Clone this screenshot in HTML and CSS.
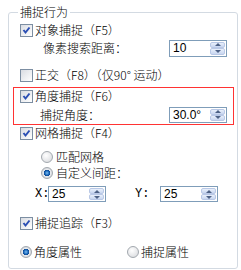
FILE: index.html
```html
<!DOCTYPE html>
<html lang="zh-CN">

<head>
    <meta charset="UTF-8">
    <title>捕捉行为</title>
    <link rel="stylesheet" href="styles.css">
</head>

<body>
<fieldset class="group">
    <legend class="group-title">捕捉行为</legend>

    <div class="row check-row r-object">
        <span class="check"><svg viewBox="0 0 11 11"><path d="M2.5 5 L4.5 7.5 L8.5 2.5"/></svg></span>
        <span>对象捕捉（F5）</span>
    </div>
    <div class="row field-row r-pixel">
        <span>像素搜索距离：</span>
        <span class="spin"><span class="spin-value">10</span><span class="spin-btns"><i class="up"></i><i class="down"></i></span></span>
    </div>
    <div class="row check-row r-ortho">
        <span class="check off"></span>
        <span>正交（F8）（仅90° 运动）</span>
    </div>

    <div class="highlight">
        <div class="row check-row">
            <span class="check"><svg viewBox="0 0 11 11"><path d="M2.5 5 L4.5 7.5 L8.5 2.5"/></svg></span>
            <span>角度捕捉（F6）</span>
        </div>
        <div class="row field-row r-angle">
            <span>捕捉角度：</span>
            <span class="spin"><span class="spin-value">30.0°</span><span class="spin-btns"><i class="up"></i><i class="down"></i></span></span>
        </div>
    </div>

    <div class="row check-row r-grid">
        <span class="check"><svg viewBox="0 0 11 11"><path d="M2.5 5 L4.5 7.5 L8.5 2.5"/></svg></span>
        <span>网格捕捉（F4）</span>
    </div>
    <div class="row radio-row r-match">
        <span class="radio"></span>
        <span>匹配网格</span>
    </div>
    <div class="row radio-row r-custom">
        <span class="radio on"></span>
        <span>自定义间距：</span>
    </div>
    <div class="row xy-row">
        <span class="xy-label">X:</span>
        <span class="spin"><span class="spin-value">25</span><span class="spin-btns"><i class="up"></i><i class="down"></i></span></span>
        <span class="xy-label y-label">Y:</span>
        <span class="spin"><span class="spin-value">25</span><span class="spin-btns"><i class="up"></i><i class="down"></i></span></span>
    </div>
    <div class="row check-row r-track">
        <span class="check"><svg viewBox="0 0 11 11"><path d="M2.5 5 L4.5 7.5 L8.5 2.5"/></svg></span>
        <span>捕捉追踪（F3）</span>
    </div>
    <div class="row props-row">
        <div class="prop">
            <span class="radio on"></span>
            <span>角度属性</span>
        </div>
        <div class="prop">
            <span class="radio"></span>
            <span>捕捉属性</span>
        </div>
    </div>
</fieldset>
</body>

</html>
```

FILE: styles.css
```css
body {
    margin: 0;
    background: #fff;
    color: #000;
    font: 300 12px/14px "Noto Sans CJK SC", "Noto Sans", sans-serif;
}

.group {
    margin: 5px 12px 0 8px;
    padding: 3px 3px 8px 4px;
    border: 1px solid #d3dae2;
    border-radius: 3px;
}

.group-title {
    margin-left: 5px;
    padding: 0 2px;
    line-height: 14px;
}

.row {
    display: flex;
    align-items: center;
    height: 16px;
}

.check-row {
    padding-left: 7px;
    gap: 2px;
}

.field-row {
    justify-content: space-between;
    padding: 0 7px 0 30px;
}

.r-pixel {
    margin-top: 1px;
    height: 18px;
}

.r-ortho {
    margin-top: 10px;
}

/* red frame round the angle snap */
.highlight {
    margin-top: 4px;
    border: 1px solid #f33;
    padding-bottom: 1px;
}

.highlight .check-row {
    padding-left: 6px;
}

.r-angle {
    margin-top: 2px;
    height: 17px;
    padding: 0 6px 0 26px;
}

.r-grid {
    margin-top: 0;
}

.radio-row {
    padding-left: 28px;
    gap: 3px;
}

.r-match {
    margin-top: 8px;
}

.r-custom {
    margin-top: 0;
}

.xy-row {
    margin-top: 5px;
    padding-left: 22px;
}

.xy-label {
    width: 13px;
    font-family: "Liberation Mono", monospace;
}

.y-label {
    width: 25px;
    margin-left: 29px;
}

.r-track {
    margin-top: 13px;
}

.props-row {
    margin-top: 13px;
    padding-left: 7px;
}

.prop {
    display: flex;
    align-items: center;
    gap: 2px;
    width: 107px;
}

.check {
    display: flex;
    box-sizing: border-box;
    width: 13px;
    height: 13px;
    border: 1px solid #7c8ea2;
    background: linear-gradient(135deg, #d9dce2, #fff);
}

.check svg {
    width: 11px;
    height: 11px;
}

.check path {
    fill: none;
    stroke: #2b4fb4;
    stroke-width: 2;
}

.radio {
    box-sizing: border-box;
    width: 12px;
    height: 12px;
    border: 1px solid #a2a8ae;
    border-radius: 50%;
    background: radial-gradient(circle at 40% 35%, #fff, #d4d6da);
}

.radio.on {
    background: radial-gradient(circle, #7fc0f0 0, #1e6cc0 2px, #0d4a92 3px, #e8eaee 3.5px, #c9ccd2 6px);
}

.spin {
    display: flex;
    align-items: center;
    justify-content: space-between;
    box-sizing: border-box;
    width: 58px;
    height: 16px;
    border: 1px solid #7f9db9;
    background: #fff;
}

.r-pixel .spin {
    height: 17px;
}

.spin-value {
    padding-left: 3px;
    font: 12px/14px "Liberation Sans", sans-serif;
}

.spin-btns {
    display: flex;
    flex-direction: column;
    height: 100%;
    padding: 1px 1px 1px 0;
    box-sizing: border-box;
}

.spin-btns i {
    display: flex;
    align-items: center;
    justify-content: center;
    flex: 1;
    width: 15px;
    box-sizing: border-box;
    border: 1px solid #b9c8e6;
    border-radius: 2px;
    background: linear-gradient(#e9f0fb, #c8d6f0);
}

.spin-btns i::after {
    content: "";
    border-left: 3px solid transparent;
    border-right: 3px solid transparent;
}

.spin-btns .up::after {
    border-bottom: 3px solid #4d6185;
}

.spin-btns .down::after {
    border-top: 3px solid #4d6185;
}
```
